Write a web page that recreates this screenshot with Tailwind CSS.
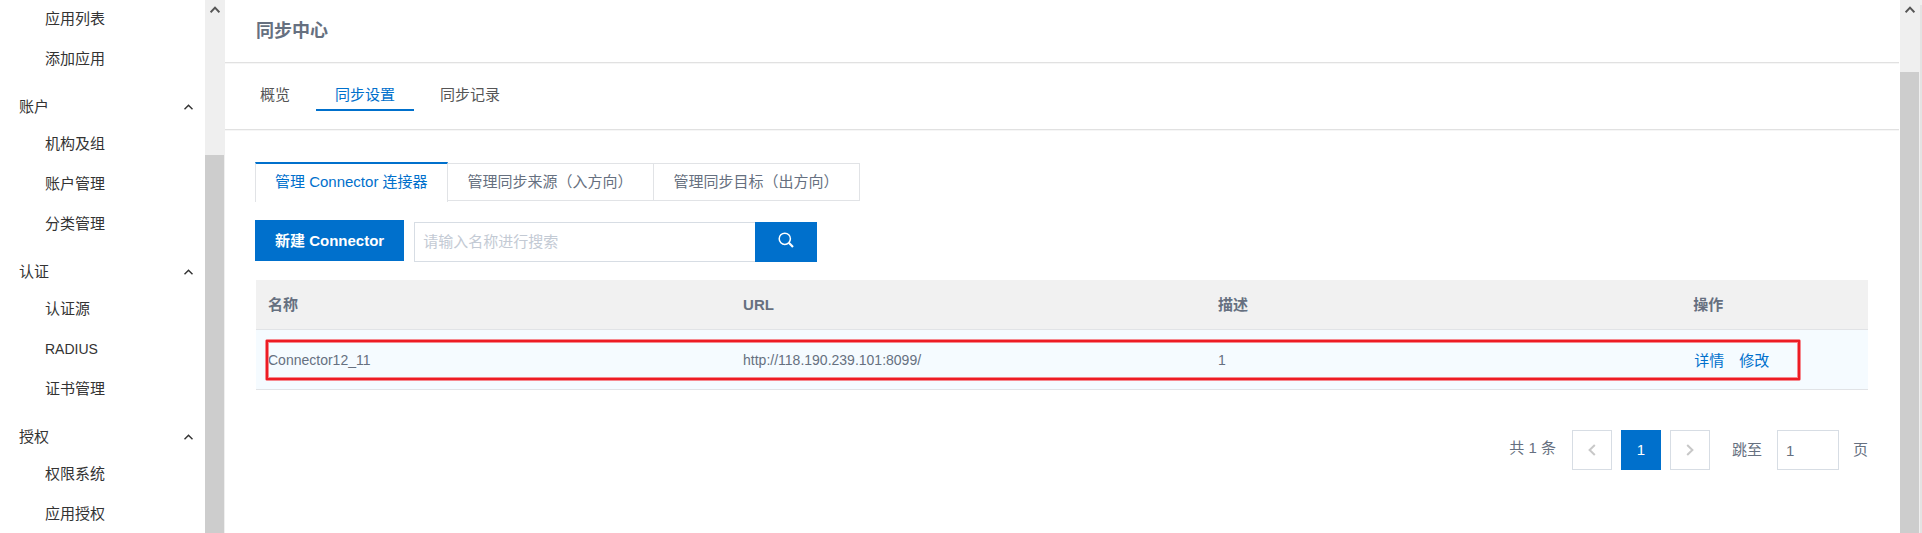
<!DOCTYPE html>
<html lang="zh-CN">
<head>
<meta charset="utf-8">
<title>同步中心</title>
<script src="https://cdn.jsdelivr.net/npm/@tailwindcss/browser@4"></script>
</head>
<body class="flex h-screen overflow-hidden bg-white font-['Liberation_Sans','Noto_Sans_CJK_SC',sans-serif] text-[15px] leading-5 text-[#333]">
  <aside class="flex w-[225px] shrink-0">
    <nav class="min-w-0 flex-1" aria-label="侧边栏">
      <ul class="-mt-px">
        <li><a href="#" class="flex h-10 items-center pl-[45px]">应用列表</a></li>
        <li><a href="#" class="flex h-10 items-center pl-[45px]">添加应用</a></li>
      </ul>
      <button type="button" class="flex h-[45px] w-full items-center justify-between pt-[10px] pr-3 pl-[19px]">账户
        <svg class="h-[6px] w-[9px]" viewBox="0 0 9 6" fill="none" stroke="#333" stroke-width="1.4"><path d="M.5 5.3 4.5 1.2 8.5 5.3"/></svg></button>
      <ul>
        <li><a href="#" class="flex h-10 items-center pl-[45px]">机构及组</a></li>
        <li><a href="#" class="flex h-10 items-center pl-[45px]">账户管理</a></li>
        <li><a href="#" class="flex h-10 items-center pl-[45px]">分类管理</a></li>
      </ul>
      <button type="button" class="flex h-[45px] w-full items-center justify-between pt-[10px] pr-3 pl-[19px]">认证
        <svg class="h-[6px] w-[9px]" viewBox="0 0 9 6" fill="none" stroke="#333" stroke-width="1.4"><path d="M.5 5.3 4.5 1.2 8.5 5.3"/></svg></button>
      <ul>
        <li><a href="#" class="flex h-10 items-center pl-[45px]">认证源</a></li>
        <li><a href="#" class="flex h-10 items-center pl-[45px] text-sm">RADIUS</a></li>
        <li><a href="#" class="flex h-10 items-center pl-[45px]">证书管理</a></li>
      </ul>
      <button type="button" class="flex h-[45px] w-full items-center justify-between pt-[10px] pr-3 pl-[19px]">授权
        <svg class="h-[6px] w-[9px]" viewBox="0 0 9 6" fill="none" stroke="#333" stroke-width="1.4"><path d="M.5 5.3 4.5 1.2 8.5 5.3"/></svg></button>
      <ul>
        <li><a href="#" class="flex h-10 items-center pl-[45px]">权限系统</a></li>
        <li><a href="#" class="flex h-10 items-center pl-[45px]">应用授权</a></li>
      </ul>
    </nav>
    <div class="flex w-5 flex-col bg-[#efefef] pr-px" aria-hidden="true">
      <div class="flex h-[155px] shrink-0 justify-center pt-[6px]">
        <svg class="h-[7px] w-[10px]" viewBox="0 0 10 7" fill="none" stroke="#555" stroke-width="2"><path d="M.6 6.2 5 1.6 9.4 6.2"/></svg>
      </div>
      <div class="flex-1 bg-[#cdcdcd]"></div>
    </div>
  </aside>

  <main class="mr-px min-w-0 flex-1">
    <header class="flex h-[63px] items-center border-b border-[#e1e1e1] pr-8 pl-[31px] shadow-[0_1px_0_#f6f6f6]">
      <h1 class="text-lg leading-6 font-bold text-[#667080]">同步中心</h1>
    </header>
    <nav class="flex h-[67px] items-start gap-[7px] border-b border-[#e1e1e1] pt-[18px] pl-4 text-[#555] shadow-[0_1px_0_#f6f6f6]" aria-label="同步中心">
      <a href="#" class="flex h-[30px] items-center border-b-2 border-transparent px-[19px]">概览</a>
      <a href="#" class="flex h-[30px] items-center border-b-2 border-[#0070cc] px-[19px] text-[#0070cc]">同步设置</a>
      <a href="#" class="flex h-[30px] items-center border-b-2 border-transparent px-[19px]">同步记录</a>
    </nav>

    <section class="pt-8 pr-[31px] pl-[30px] text-[#667080]">
      <div class="flex h-10 items-start">
        <button type="button" class="flex h-10 items-center border-x border-t-2 border-x-[#e1e3e6] border-t-[#0070cc] px-[19px] pt-1 pb-1.5 text-[#0070cc]">管理 Connector 连接器</button>
        <button type="button" class="mt-px flex h-[38px] items-center border-y border-r border-[#e1e3e6] px-5">管理同步来源（入方向）</button>
        <button type="button" class="mt-px flex h-[38px] items-center border-y border-r border-[#e1e3e6] px-5">管理同步目标（出方向）</button>
      </div>

      <form class="mt-[18px] flex items-start" onsubmit="return false">
        <button type="button" class="h-[41px] bg-[#0070cc] px-5 font-bold text-white">新建 Connector</button>
        <div class="mt-0.5 ml-2.5 flex h-10">
          <input type="text" aria-label="名称" placeholder="请输入名称进行搜索" class="w-[341px] border border-r-0 border-[#d7dde4] px-2 outline-none placeholder:text-[#c3cad4]">
          <button type="submit" aria-label="搜索" class="flex w-[62px] justify-center bg-[#0070cc] pt-[10px]">
            <svg class="h-4 w-4" viewBox="0 0 16 16" fill="none" stroke="#fff" stroke-width="1.5"><circle cx="6.8" cy="6.8" r="5.6"/><path d="M10.8 10.8 15 15" stroke-width="2.2"/></svg>
          </button>
        </div>
      </form>

      <div class="relative mt-[18px] pl-px">
        <table class="w-full table-fixed border-separate border-spacing-0 text-left">
          <colgroup><col class="w-[29.47%]"><col class="w-[29.47%]"><col class="w-[29.47%]"><col></colgroup>
          <thead>
            <tr class="h-[50px] bg-[#f1f1f1] *:border-b *:border-[#e1e3e6]">
              <th class="px-3 font-bold">名称</th><th class="px-3 font-bold">URL</th><th class="px-3 font-bold">描述</th><th class="px-3 font-bold">操作</th>
            </tr>
          </thead>
          <tbody>
            <tr class="h-[60px] bg-[#f5fbff] *:border-b *:border-[#e1e3e6]">
              <td class="px-3 text-sm">Connector12_11</td><td class="px-3 text-sm">http://118.190.239.101:8099/</td><td class="px-3 text-sm">1</td>
              <td class="px-3 pt-0.5 text-[#0070cc]"><div class="flex gap-[15px] pl-px"><a href="#">详情</a><a href="#">修改</a></div></td>
            </tr>
          </tbody>
        </table>
        <div class="pointer-events-none absolute top-[59px] right-[67px] left-[10px] h-[42px] rounded-[2px] border border-[#f58a90]"><div class="h-full border-2 border-[#ed1c24]"><div class="h-full border border-[#f58a90]"></div></div></div>
      </div>

      <div class="mt-10 flex h-10 items-center justify-end">
        <span class="mr-4 pb-1">共 1 条</span>
        <button type="button" aria-label="上一页" class="mr-[9px] flex h-10 w-10 items-center justify-center border border-[#d7dde4]">
          <svg class="h-3 w-2" viewBox="0 0 8 12" fill="none" stroke="#c8c8c8" stroke-width="2"><path d="M6.8 1 1.6 6 6.8 11"/></svg></button>
        <button type="button" class="mr-[9px] h-10 w-10 bg-[#0070cc] text-white">1</button>
        <button type="button" aria-label="下一页" class="mr-[22px] flex h-10 w-10 items-center justify-center border border-[#d7dde4]">
          <svg class="h-3 w-2" viewBox="0 0 8 12" fill="none" stroke="#c8c8c8" stroke-width="2"><path d="M1.2 1 6.4 6 1.2 11"/></svg></button>
        <label for="page" class="mr-[15px]">跳至</label>
        <input id="page" type="text" value="1" class="mr-[14px] h-10 w-[62px] border border-[#d7dde4] px-2 outline-none">
        <span>页</span>
      </div>
    </section>
  </main>

  <div class="flex w-[22px] shrink-0" aria-hidden="true">
    <div class="flex w-5 flex-col bg-[#efefef] pr-px">
      <div class="flex h-[72px] shrink-0 justify-center pt-[6px]">
        <svg class="h-[7px] w-[10px]" viewBox="0 0 10 7" fill="none" stroke="#555" stroke-width="2"><path d="M.6 6.2 5 1.6 9.4 6.2"/></svg>
      </div>
      <div class="flex-1 bg-[#cdcdcd]"></div>
    </div>
    <div class="w-0.5 border-t-[5px] border-[#efefef] bg-[#e3e3e3]"></div>
  </div>
</body>
</html>
